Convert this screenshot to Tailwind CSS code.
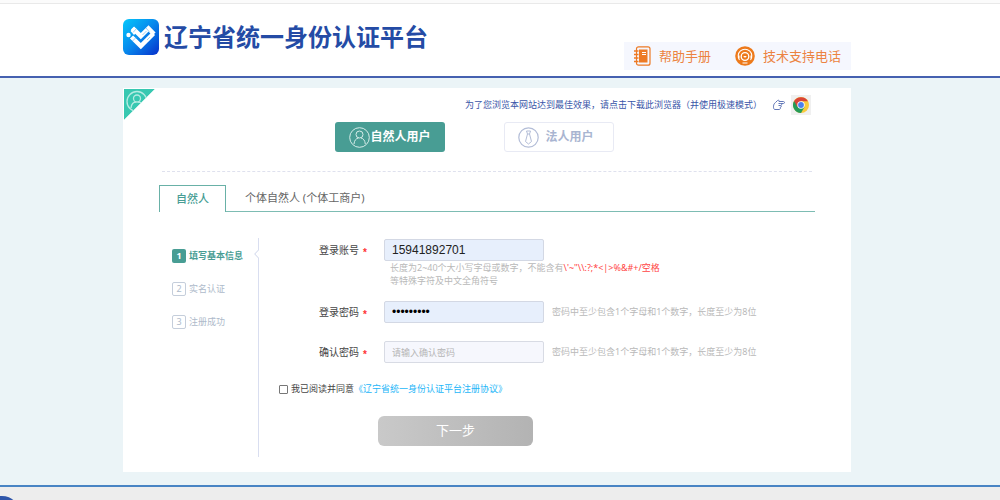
<!DOCTYPE html>
<html lang="zh-CN">
<head>
<meta charset="utf-8">
<meta name="viewport" content="width=device-width, initial-scale=1">
<title>辽宁省统一身份认证平台</title>
<script src="https://cdn.jsdelivr.net/npm/@tailwindcss/browser@4"></script>
</head>
<body class="flex h-screen flex-col overflow-hidden bg-[#ebf4f7] font-['Noto_Sans','Noto_Sans_CJK_SC',sans-serif] text-[#666]">
<div class="h-[3px] shrink-0 bg-[#fbfbfb]"></div>
<header class="shrink-0 border-t border-b-2 border-t-[#e9e9e9] border-b-[#4561b0] bg-white pr-[26px]">
  <div class="mx-auto flex h-[72px] max-w-[728px] items-start justify-between">
    <div class="flex items-center gap-[5px] pt-[15px]">
      <svg class="size-9" viewBox="0 0 36 36" aria-hidden="true">
        <defs><linearGradient id="lg" x1="0" y1="0" x2="1" y2="1"><stop offset="0" stop-color="#05c8fb"/><stop offset=".5" stop-color="#0787ec"/><stop offset="1" stop-color="#0730cb"/></linearGradient></defs>
        <rect width="36" height="36" rx="6" fill="url(#lg)"/>
        <g fill="none" stroke="#fff" stroke-width="4.500"><path d="M8.500 18 17.800 27 30.500 14.500"/><path d="M9.500 9 17.800 17 25.500 9.500 31 15"/></g>
        <path d="m7.500 12 3.500-4 4 4-4 4z" fill="#fff"/>
        <circle cx="5.500" cy="16" r="2.200" fill="#fff"/>
        <path d="m14 9-4 4.500M19.500 16l4-4M23 9l3.500 4M9.500 22l4-4M24 21l3-3" stroke="#59b4f4" stroke-width=".6"/>
      </svg>
      <h1 class="text-2xl leading-9 font-bold text-[#244ba5]">辽宁省统一身份认证平台</h1>
    </div>
    <nav class="mt-[38px] flex h-7 items-center gap-6 bg-[#f5f7fe] px-2.5 text-[13px] leading-5 text-[#ec8341]">
      <a href="#" class="flex items-center gap-2">
        <svg class="h-5 w-[17px]" viewBox="0 0 17 20" aria-hidden="true"><rect x="2.500" y=".8" width="13.500" height="18.400" rx="2" fill="none" stroke="#ed7a25" stroke-width="1.200"/><rect x="5" y="3.500" width="8.500" height="13" fill="#ed7a25"/><path d="M8 6.500h4M8 8.500h4" stroke="#fff"/><path d="M0 5h4.500M0 8.500h4.500M0 12h4.500M0 15.500h4.500" stroke="#ed7a25" stroke-width="1.400"/></svg>
        帮助手册</a>
      <a href="#" class="flex items-center gap-2">
        <svg class="size-5" viewBox="0 0 20 20" aria-hidden="true"><circle cx="10" cy="10" r="9.800" fill="#ed7a1c"/><path d="M4.500 14A6.800 6.800 0 1 1 15.500 14M4 9.500v3M16 9.500v3M7.500 17h5" fill="none" stroke="#fff" stroke-width="1.100"/><circle cx="10" cy="10.500" r="3.800" fill="none" stroke="#fff" stroke-width="1.300"/><path d="M8.500 10a1.500 1.500 0 0 0 3 0z" fill="#fff"/></svg>
        技术支持电话</a>
    </nav>
  </div>
</header>

<main class="grow pt-2.5 pr-[26px] pb-[13px]">
  <section class="relative mx-auto max-w-[728px] bg-white px-9 pt-[7px] pb-[15px]">
    <svg class="absolute top-px left-px size-[31px]" viewBox="0 0 31 31" aria-hidden="true"><defs><clipPath id="tri"><path d="M0 0h31L0 31z"/></clipPath></defs><g clip-path="url(#tri)"><path d="M0 0h31L0 31z" fill="#38c8b1"/><g fill="none" stroke="#b4ebe2" stroke-width="1.300"><circle cx="13" cy="12.500" r="10"/><circle cx="13" cy="9.500" r="3.500"/><path d="M7 19c.5-4 2.500-6 5-6M14 13c3 0 5 2 5 6"/></g></g></svg>

    <div class="mr-1 flex h-5 items-center justify-end text-[9px] text-[#3855a8]">
      <a href="#">为了您浏览本网站达到最佳效果，请点击下载此浏览器（并使用极速模式）</a>
      <svg class="mr-1.5 ml-2.5 h-3 w-[13px]" viewBox="0 0 13 12" fill="none" stroke="#6378b8" aria-hidden="true"><path d="M3.500 3.500 5.500 1.500C6.500.7 7.500 1.500 7 2.500h4.500c1.300 0 1.300 2 0 2H8.500c1.600 0 1.600 2 0 2 1.200.2 1 1.900-.3 1.900.6 1.300-.2 2.100-1.200 2.100H2.500C1 9.500 1 5 3.500 3.500zM8.500 4.500H6.500M8.500 6.500h-2" stroke-linejoin="round"/></svg>
      <a href="#" aria-label="Chrome" class="flex size-5 items-center justify-center bg-[#f0f0f0]">
        <svg class="size-4" viewBox="0 0 16 16" aria-hidden="true"><circle cx="8" cy="8" r="8" fill="#f9cb3e"/><path d="M8 8 1.070 4A8 8 0 0 0 8 16l3.500-6z" fill="#259b58"/><path d="M8 8 4.500 10 1.070 4A8 8 0 0 1 14.930 4.300H8z" fill="#da4437"/><circle cx="8" cy="8" r="3.700" fill="#fff"/><circle cx="8" cy="8" r="2.900" fill="#4a80ee"/></svg>
      </a>
    </div>

    <div class="mt-[7px] flex justify-center gap-[59px] pr-[25px] text-xs font-bold">
      <button type="button" class="flex h-[30px] w-[110px] items-center justify-center rounded-[3px] bg-[#489d94] text-white">
        <svg class="size-[21px]" viewBox="0 0 21 21" fill="none" stroke="#d6ece9" aria-hidden="true"><circle cx="10.500" cy="10.500" r="9.800"/><circle cx="10.500" cy="7.500" r="3.500"/><path d="M5 17c.3-3.500 2-5.600 4.500-6M12 11c2.500.5 4 2.500 4.300 6"/></svg>自然人用户</button>
      <button type="button" class="flex h-[30px] w-[110px] items-center justify-center gap-1.5 rounded-[3px] border border-[#e8eaf4] pr-1.5 text-[#a9b5d1]">
        <svg class="size-[21px]" viewBox="0 0 21 21" fill="none" stroke="#b3bdd7" aria-hidden="true"><circle cx="10.500" cy="10.500" r="9.700" stroke-width="1.200"/><path d="M8.500 4h4l-1 3h-2zM9.500 7 7.500 14.500l3 2.500 3-2.500-2-7.500"/></svg>法人用户</button>
    </div>

    <div class="mx-[3px] mt-[19px] border-t border-dashed border-[#dfe1ee]"></div>

    <div class="mt-[13px] flex h-[27px] text-[11px]">
      <button type="button" class="w-[67px] border-x border-t border-[#69b1a7] font-medium text-[#489d94]">自然人</button>
      <div class="flex grow border-b border-[#7dbcb3]"><button type="button" class="pl-[19px]">个体自然人 (个体工商户)</button></div>
    </div>

    <div class="mt-[26px] flex">
      <div class="relative w-[100px] shrink-0 border-r border-[#d9def0] pt-[11px] pl-[13px] text-[9px] leading-[14px] text-[#aebaca]">
        <ol class="flex flex-col gap-[19px]">
          <li class="flex gap-[3px] font-bold text-[#489d94]"><span class="size-3.5 rounded-[2px] bg-[#489d94] text-center text-white">1</span>填写基本信息</li>
          <li class="flex gap-[3px]"><span class="size-3.5 rounded-[2px] border border-[#c5cedb] text-center leading-3">2</span>实名认证</li>
          <li class="flex gap-[3px]"><span class="size-3.5 rounded-[2px] border border-[#c5cedb] text-center leading-3">3</span>注册成功</li>
        </ol>
        <svg class="absolute top-3 -right-px h-2 w-[5px]" viewBox="0 0 5 8" aria-hidden="true"><path d="M4 0h1v8H4z" fill="#fff"/><path d="M4.500 0 .7 4l3.800 4" fill="none" stroke="#cdd4ea"/></svg>
      </div>
      <form class="grow pt-px pb-[11px] pl-5 text-[10px] text-[#444]">
        <div class="flex h-[22px] items-center">
          <label for="account" class="flex w-[105px] shrink-0 items-center gap-1 pl-10">登录账号<span class="pt-1 font-['Liberation_Sans'] font-bold text-[#f33]">*</span></label>
          <input id="account" type="text" value="15941892701" class="h-[22px] w-40 rounded-[2px] border border-[#d3d8e4] bg-[#e7effc] px-[7px] font-['Liberation_Sans',sans-serif] text-xs text-[#222]">
        </div>
        <p class="ml-[111px] text-[9px] leading-[13px] text-[#b9b9b9]">长度为2~40个大小写字母或数字，不能含有<span class="text-[#f44]">\'~"\\:?;*&lt;|&gt;%&amp;#+/空格</span><br>等特殊字符及中文全角符号</p>
        <div class="mt-3.5 flex h-[22px] items-center">
          <label for="pwd" class="flex w-[105px] shrink-0 items-center gap-1 pl-10">登录密码<span class="pt-1 font-['Liberation_Sans'] font-bold text-[#f33]">*</span></label>
          <input id="pwd" type="password" value="abcdef123" class="h-[22px] w-40 rounded-[2px] border border-[#d3d8e4] bg-[#e7effc] px-[7px] font-['Liberation_Sans',sans-serif] text-xs text-black">
          <span class="ml-2 text-[9px] whitespace-nowrap text-[#b9b9b9]">密码中至少包含1个字母和1个数字，长度至少为8位</span>
        </div>
        <div class="mt-[18px] flex h-[22px] items-center">
          <label for="pwd2" class="flex w-[105px] shrink-0 items-center gap-1 pl-10">确认密码<span class="pt-1 font-['Liberation_Sans'] font-bold text-[#f33]">*</span></label>
          <input id="pwd2" type="password" placeholder="请输入确认密码" class="h-[22px] w-40 rounded-[2px] border border-[#d8dbe4] bg-[#f6f7fd] px-[7px] text-[9px] placeholder:text-[#b5b5b5]">
          <span class="ml-2 text-[9px] whitespace-nowrap text-[#b9b9b9]">密码中至少包含1个字母和1个数字，长度至少为8位</span>
        </div>
        <div class="mt-[18px] flex h-4 items-center text-[9px]">
          <input id="agree" type="checkbox" class="mr-[3px] size-[9px] appearance-none rounded-[1px] border border-[#777] bg-white checked:bg-[#489d94]">
          <label for="agree">我已阅读并同意</label><a href="#" class="text-[#25b6f8]">《辽宁省统一身份认证平台注册协议》</a>
        </div>
        <button type="submit" class="mt-[19px] ml-[99px] block h-[30px] w-[155px] rounded-md bg-linear-to-r from-[#c9c9c9] to-[#b3b3b3] text-[13px] text-white">下一步</button>
      </form>
    </div>
  </section>
</main>

<footer class="relative h-[15px] shrink-0 overflow-hidden border-t-2 border-[#4884c4] bg-[#ededed]">
  <div class="absolute top-[9px] -left-5 size-10 rounded-[18px] bg-[#2f55a9]"></div>
</footer>
</body>
</html>
